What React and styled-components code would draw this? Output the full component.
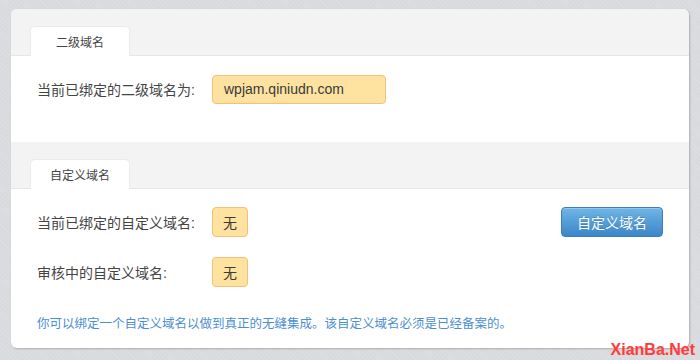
import React from "react";
import styled, { createGlobalStyle } from "styled-components";

const Global = createGlobalStyle`
  html, body { margin: 0; padding: 0; }
  body {
    background-color: #d9dadd;
    background-image: repeating-linear-gradient(45deg, rgba(255,255,255,0.12) 0 1px, transparent 1px 3px);
    font-family: "Liberation Sans", "Noto Sans CJK SC", sans-serif;
    width: 700px;
    height: 360px;
    overflow: hidden;
    position: relative;
  }
`;

const Page = styled.div`
  padding: 9px 11px 0 11px;
`;

const Card = styled.div`
  width: 678px;
  height: 339px;
  background: #fff;
  border-radius: 6px;
  box-shadow: 1px 1px 2px rgba(0, 0, 0, 0.22);
  overflow: hidden;
  display: flex;
  flex-direction: column;
`;

const TabBar = styled.div`
  height: 30px;
  padding: 16px 0 0 19px;
  background: #f3f3f3;
  border-bottom: 1px solid #e6e6e6;
  display: flex;
  align-items: flex-end;
  border-radius: ${(p) => (p.$first ? "6px 6px 0 0" : "0")};
`;

const Tab = styled.div`
  width: 100px;
  height: 30px;
  margin-bottom: -1px;
  background: #fff;
  border: 1px solid #ebebeb;
  border-bottom: none;
  border-radius: 5px 5px 0 0;
  box-sizing: border-box;
  display: flex;
  align-items: center;
  justify-content: center;
  font-size: 12px;
  color: #444;
`;

const Body = styled.div`
  padding: ${(p) => p.$pad};
  display: flex;
  flex-direction: column;
  gap: 20px;
`;

const Row = styled.div`
  display: flex;
  align-items: center;
  height: 30px;
`;

const Label = styled.div`
  width: 175px;
  font-size: 14px;
  color: #444;
`;

const Badge = styled.div`
  height: ${(p) => p.$h || 30}px;
  width: ${(p) => (p.$w ? `${p.$w}px` : "auto")};
  box-sizing: border-box;
  padding: 0 ${(p) => p.$px || 11}px;
  background: #fee3a0;
  border: 1px solid #f4c07a;
  border-radius: 4px;
  display: flex;
  align-items: center;
  font-size: 14px;
  color: #3a3a3a;
`;

const Spacer = styled.div`
  flex: 1;
`;

const Button = styled.button`
  width: 102px;
  height: 30px;
  margin: 0;
  padding: 0;
  border: 1px solid #3b7dbd;
  border-radius: 4px;
  background: linear-gradient(#6fb5e6, #3c86c8);
  box-shadow: inset 0 1px 0 rgba(255, 255, 255, 0.25);
  color: #fff;
  font-family: inherit;
  font-size: 14px;
  text-shadow: 0 -1px 0 rgba(0, 0, 0, 0.15);
`;

const Note = styled.p`
  margin: 6px 0 0 0;
  font-size: 12.5px;
  color: #4b8fd2;
`;

const Watermark = styled.div`
  position: absolute;
  right: 5px;
  bottom: 1px;
  font-family: "Liberation Sans", sans-serif;
  font-weight: bold;
  font-size: 16px;
  color: #ff3b3b;
`;

export default function App() {
  return (
    <>
      <Global />
      <Page>
        <Card>
          <TabBar $first>
            <Tab>二级域名</Tab>
          </TabBar>
          <Body $pad="18px 26px 38px 26px">
            <Row>
              <Label>当前已绑定的二级域名为:</Label>
              <Badge $h={29} $w={174}>wpjam.qiniudn.com</Badge>
            </Row>
          </Body>
          <TabBar>
            <Tab>自定义域名</Tab>
          </TabBar>
          <Body $pad="18px 26px 0 26px">
            <Row>
              <Label>当前已绑定的自定义域名:</Label>
              <Badge $px={10}>无</Badge>
              <Spacer />
              <Button>自定义域名</Button>
            </Row>
            <Row>
              <Label>审核中的自定义域名:</Label>
              <Badge $px={10}>无</Badge>
            </Row>
            <Note>你可以绑定一个自定义域名以做到真正的无缝集成。该自定义域名必须是已经备案的。</Note>
          </Body>
        </Card>
      </Page>
      <Watermark>XianBa.Net</Watermark>
    </>
  );
}
